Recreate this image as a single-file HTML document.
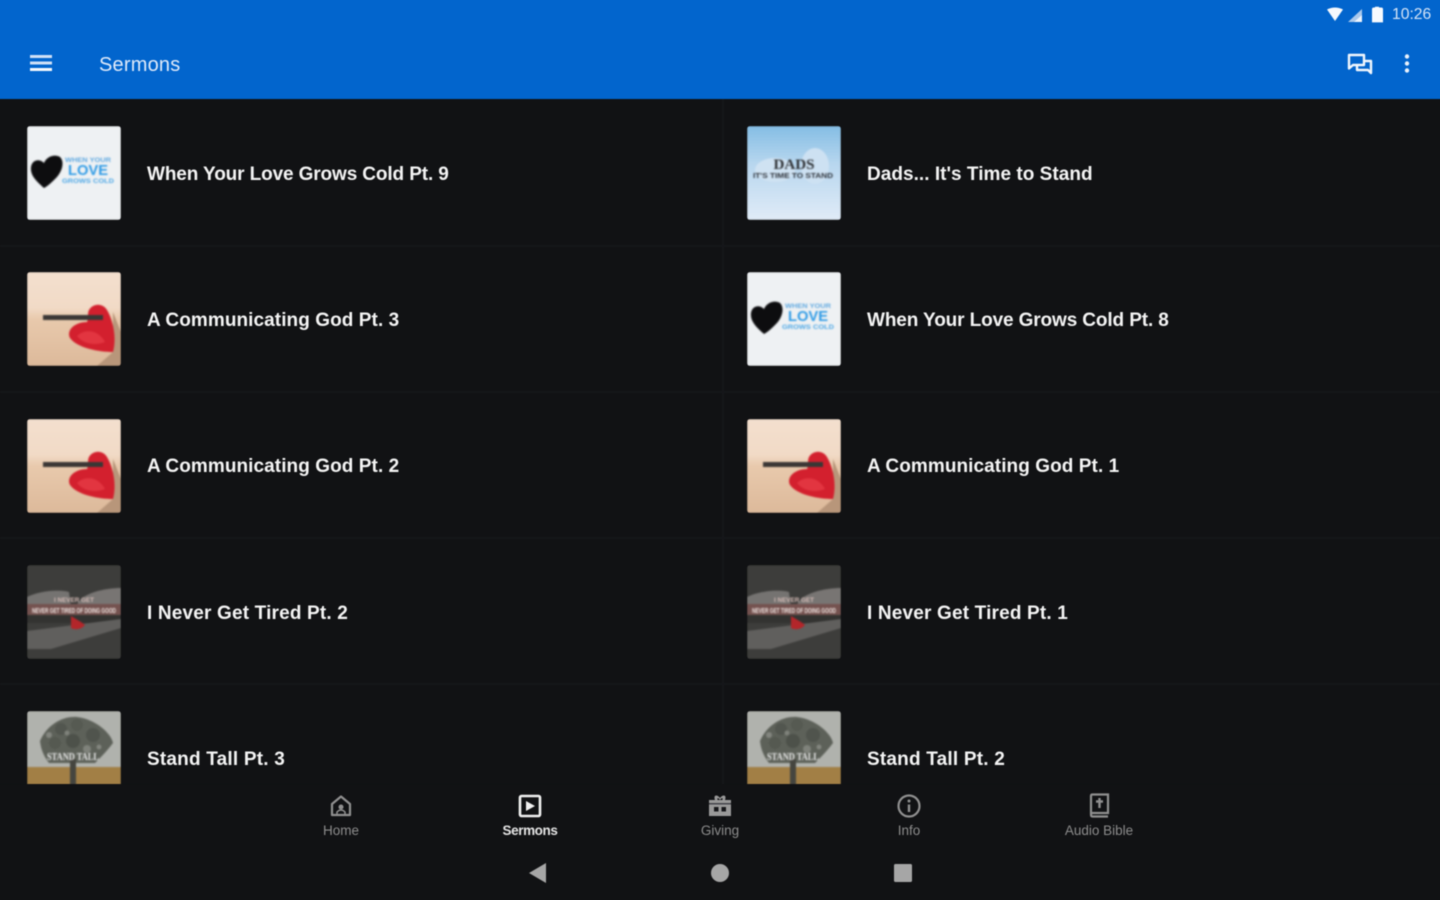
<!DOCTYPE html>
<html lang="en">
<head>
<meta charset="utf-8">
<title>Sermons</title>
<style>
html,body{margin:0;padding:0;width:1440px;height:900px;overflow:hidden;background:#111214;font-family:"Liberation Sans",sans-serif}
#app{position:relative;width:1440px;height:900px;filter:blur(.55px)}
.bar{position:absolute;left:-6px;top:-6px;width:1452px;height:105px;background:#0265cd}
.title{position:absolute;left:99px;top:53px;font-size:20px;line-height:24px;color:#dfeafa;letter-spacing:.2px}
.time{position:absolute;left:1392px;top:6px;font-size:15.700px;line-height:18px;color:#d5e4f7}
.row-t{position:absolute;font-size:19px;line-height:24px;font-weight:bold;color:#f4f4f4;white-space:nowrap}
.ls-w{letter-spacing:-.12px}
.ls-d{letter-spacing:.03px}
.ls-a{letter-spacing:.07px}
.ls-n{letter-spacing:.17px}
.ls-s{letter-spacing:.2px}
.thumb{position:absolute;width:94px;height:94px;overflow:hidden;border-radius:3px}
.thumb svg{display:block}
.soft svg{filter:blur(.8px)}
.softer svg{filter:blur(1.2px)}
.div{position:absolute;background:#16171a}
.fade{position:absolute;left:-6px;top:784px;width:1452px;height:122px;background:#111214}
.nav{position:absolute;top:823px;font-size:13.500px;line-height:15px;color:#8c8c8c;transform:translateX(-50%);white-space:nowrap}
.nav.on{color:#e4e4e4;font-weight:bold;letter-spacing:-.4px}
.ic{position:absolute}
</style>
</head>
<body>
<div id="app">

<div class="bar"></div>

<!-- status bar -->
<svg class="ic" style="left:1325px;top:6px" width="60" height="18" viewBox="0 0 60 18">
<path d="M2 3.500Q10 -.5 18 3.500L10 15Z" fill="#f4f8fd"/>
<path d="M23 16L37 3V16Z" fill="#a9c8ec"/>
<path d="M29 16L37 9V16Z" fill="#eef4fc"/>
<path d="M47 4Q47 2 49 2H50V1H54V2H56Q58 2 58 4V21H47Z" transform="scale(1 .78)" fill="#f7fafe"/>
</svg>
<div class="time">10:26</div>

<!-- hamburger -->
<svg class="ic" style="left:30px;top:54px" width="22" height="18" viewBox="0 0 22 18">
<rect x="0" y="1" width="22" height="3" fill="#cfe0f6"/>
<rect x="0" y="7.500" width="22" height="3" fill="#cfe0f6"/>
<rect x="0" y="14" width="22" height="3" fill="#f4f8fd"/>
</svg>
<div class="title">Sermons</div>

<!-- chat icon -->
<svg class="ic" style="left:1346px;top:52px" width="28" height="24" viewBox="0 0 28 24" fill="none" stroke="#f0f6fd" stroke-width="2.400" stroke-linejoin="round">
<path d="M3 3H18V13H7L3 16.500Z"/>
<path d="M11 13V18H22L25 21V9H18"/>
</svg>
<!-- overflow -->
<svg class="ic" style="left:1402px;top:53px" width="10" height="22" viewBox="0 0 10 22" fill="#e8f1fb">
<circle cx="5" cy="3.500" r="2.200"/><circle cx="5" cy="10.500" r="2.200"/><circle cx="5" cy="17.500" r="2.200"/>
</svg>

<!-- dividers -->
<div class="div" style="left:722px;top:99px;width:2px;height:685px"></div>
<div class="div" style="left:0;top:245px;width:1440px;height:2px"></div>
<div class="div" style="left:0;top:391px;width:1440px;height:2px"></div>
<div class="div" style="left:0;top:537px;width:1440px;height:2px"></div>
<div class="div" style="left:0;top:683px;width:1440px;height:2px"></div>

<!-- ROW 1 -->
<div class="thumb soft" style="left:27px;top:126px">
<svg width="94" height="94" viewBox="0 0 94 94"><rect width="94" height="94" fill="#eef1f3"/>
<path d="M17 62C9 55 3 49 4 41C5 34 12 32 17 37C20 30 28 28 33 31C38 36 35 46 29 52C25 56 21 60 17 62Z" fill="#0d0d0f"/>
<text x="61" y="36" font-family="Liberation Sans" font-size="6.500" font-weight="bold" fill="#5fa8e0" text-anchor="middle" textLength="46" lengthAdjust="spacingAndGlyphs">WHEN YOUR</text>
<text x="61" y="49" font-family="Liberation Sans" font-size="15" font-weight="bold" fill="#2f9be6" text-anchor="middle" textLength="40" lengthAdjust="spacingAndGlyphs">LOVE</text>
<text x="61" y="57" font-family="Liberation Sans" font-size="6.500" font-weight="bold" fill="#4fa8e6" text-anchor="middle" textLength="52" lengthAdjust="spacingAndGlyphs">GROWS COLD</text>
</svg></div>
<div class="row-t ls-w" style="left:147px;top:163px">When Your Love Grows Cold Pt. 9</div>

<div class="thumb soft" style="left:747px;top:126px">
<svg width="94" height="94" viewBox="0 0 94 94"><defs><linearGradient id="sky" x1="0" y1="0" x2="0" y2="1"><stop offset="0" stop-color="#84bde4"/><stop offset=".4" stop-color="#b7d6ee"/><stop offset="1" stop-color="#e0ebf7"/></linearGradient></defs><rect width="94" height="94" fill="url(#sky)"/>
<ellipse cx="28" cy="44" rx="20" ry="12" fill="#cfe2f2"/><ellipse cx="68" cy="40" rx="14" ry="18" fill="#cde1f2"/>
<text x="47" y="43" font-family="Liberation Serif" font-size="15" font-weight="bold" fill="#2d3034" text-anchor="middle" textLength="41" lengthAdjust="spacingAndGlyphs">DADS</text>
<text x="46" y="52" font-family="Liberation Sans" font-size="7" font-weight="bold" fill="#2f343c" text-anchor="middle" textLength="80" lengthAdjust="spacingAndGlyphs">IT'S TIME TO STAND</text>
</svg></div>
<div class="row-t ls-d" style="left:867px;top:163px">Dads... It's Time to Stand</div>

<!-- ROW 2 -->
<div class="thumb soft" style="left:27px;top:272px">
<svg width="94" height="94" viewBox="0 0 94 94"><defs><linearGradient id="wood" x1="0" y1="0" x2="0" y2="1"><stop offset="0" stop-color="#f3dfce"/><stop offset=".38" stop-color="#f1dac6"/><stop offset=".5" stop-color="#e8c9ac"/><stop offset="1" stop-color="#dcb99a"/></linearGradient></defs><rect width="94" height="94" fill="url(#wood)"/>
<path d="M86 40L94 60V94H70L86 80Z" fill="#b8967a"/>
<path d="M62 38C66 31 76 31 80 38C86 48 90 66 86 80C72 80 50 76 43 66C39 58 48 50 60 50C62 46 60 42 62 38Z" fill="#d3202e"/>
<path d="M50 64C58 56 72 58 78 70C68 74 56 72 50 64Z" fill="#e23540"/>
<rect x="16" y="43" width="60" height="5" fill="#3a3735"/>
</svg></div>
<div class="row-t ls-a" style="left:147px;top:309px">A Communicating God Pt. 3</div>

<div class="thumb soft" style="left:747px;top:272px">
<svg width="94" height="94" viewBox="0 0 94 94"><rect width="94" height="94" fill="#eef1f3"/>
<path d="M17 62C9 55 3 49 4 41C5 34 12 32 17 37C20 30 28 28 33 31C38 36 35 46 29 52C25 56 21 60 17 62Z" fill="#0d0d0f"/>
<text x="61" y="36" font-family="Liberation Sans" font-size="6.500" font-weight="bold" fill="#5fa8e0" text-anchor="middle" textLength="46" lengthAdjust="spacingAndGlyphs">WHEN YOUR</text>
<text x="61" y="49" font-family="Liberation Sans" font-size="15" font-weight="bold" fill="#2f9be6" text-anchor="middle" textLength="40" lengthAdjust="spacingAndGlyphs">LOVE</text>
<text x="61" y="57" font-family="Liberation Sans" font-size="6.500" font-weight="bold" fill="#4fa8e6" text-anchor="middle" textLength="52" lengthAdjust="spacingAndGlyphs">GROWS COLD</text>
</svg></div>
<div class="row-t ls-w" style="left:867px;top:309px">When Your Love Grows Cold Pt. 8</div>

<!-- ROW 3 -->
<div class="thumb soft" style="left:27px;top:419px">
<svg width="94" height="94" viewBox="0 0 94 94"><rect width="94" height="94" fill="url(#wood)"/>
<path d="M86 40L94 60V94H70L86 80Z" fill="#b8967a"/>
<path d="M62 38C66 31 76 31 80 38C86 48 90 66 86 80C72 80 50 76 43 66C39 58 48 50 60 50C62 46 60 42 62 38Z" fill="#d3202e"/>
<path d="M50 64C58 56 72 58 78 70C68 74 56 72 50 64Z" fill="#e23540"/>
<rect x="16" y="43" width="60" height="5" fill="#3a3735"/>
</svg></div>
<div class="row-t ls-a" style="left:147px;top:455px">A Communicating God Pt. 2</div>

<div class="thumb soft" style="left:747px;top:419px">
<svg width="94" height="94" viewBox="0 0 94 94"><rect width="94" height="94" fill="url(#wood)"/>
<path d="M86 40L94 60V94H70L86 80Z" fill="#b8967a"/>
<path d="M62 38C66 31 76 31 80 38C86 48 90 66 86 80C72 80 50 76 43 66C39 58 48 50 60 50C62 46 60 42 62 38Z" fill="#d3202e"/>
<path d="M50 64C58 56 72 58 78 70C68 74 56 72 50 64Z" fill="#e23540"/>
<rect x="16" y="43" width="60" height="5" fill="#3a3735"/>
</svg></div>
<div class="row-t ls-a" style="left:867px;top:455px">A Communicating God Pt. 1</div>

<!-- ROW 4 -->
<div class="thumb soft" style="left:27px;top:565px">
<svg width="94" height="94" viewBox="0 0 94 94"><rect width="94" height="94" fill="#3d3d3b"/>
<path d="M0 32C12 26 32 24 42 27L44 42H0Z" fill="#757371"/>
<path d="M50 40C54 28 78 23 94 23V42H50Z" fill="#787573"/>
<rect x="0" y="39" width="94" height="11" fill="#74524f"/>
<text x="47" y="37" font-family="Liberation Sans" font-size="6" font-weight="bold" fill="#d6bcb7" text-anchor="middle" textLength="40" lengthAdjust="spacingAndGlyphs">I NEVER GET</text>
<text x="47" y="48" font-family="Liberation Sans" font-size="7" font-weight="bold" fill="#efe4e1" text-anchor="middle" textLength="84" lengthAdjust="spacingAndGlyphs">NEVER GET TIRED OF DOING GOOD</text>
<rect x="0" y="50" width="94" height="8" fill="#333331"/>
<path d="M0 66L94 54V63L24 84H0Z" fill="#605f5d"/>
<path d="M44 51L54 57L58 60C54 65 47 65 44 63Z" fill="#b3262a"/>
</svg></div>
<div class="row-t ls-n" style="left:147px;top:602px">I Never Get Tired Pt. 2</div>

<div class="thumb soft" style="left:747px;top:565px">
<svg width="94" height="94" viewBox="0 0 94 94"><rect width="94" height="94" fill="#3d3d3b"/>
<path d="M0 32C12 26 32 24 42 27L44 42H0Z" fill="#757371"/>
<path d="M50 40C54 28 78 23 94 23V42H50Z" fill="#787573"/>
<rect x="0" y="39" width="94" height="11" fill="#74524f"/>
<text x="47" y="37" font-family="Liberation Sans" font-size="6" font-weight="bold" fill="#d6bcb7" text-anchor="middle" textLength="40" lengthAdjust="spacingAndGlyphs">I NEVER GET</text>
<text x="47" y="48" font-family="Liberation Sans" font-size="7" font-weight="bold" fill="#efe4e1" text-anchor="middle" textLength="84" lengthAdjust="spacingAndGlyphs">NEVER GET TIRED OF DOING GOOD</text>
<rect x="0" y="50" width="94" height="8" fill="#333331"/>
<path d="M0 66L94 54V63L24 84H0Z" fill="#605f5d"/>
<path d="M44 51L54 57L58 60C54 65 47 65 44 63Z" fill="#b3262a"/>
</svg></div>
<div class="row-t ls-n" style="left:867px;top:602px">I Never Get Tired Pt. 1</div>

<!-- ROW 5 -->
<div class="thumb soft" style="left:27px;top:711px">
<svg width="94" height="94" viewBox="0 0 94 94"><rect width="94" height="94" fill="#b0b2ad"/>
<rect y="56" width="94" height="38" fill="#a27f45"/>
<path d="M13 30C20 14 35 5 50 6C68 8 84 22 86 32C80 40 74 46 68 52H22C16 44 14 38 13 30Z" fill="#5d6159"/>
<circle cx="34" cy="18" r="6" fill="#52564f"/><circle cx="50" cy="14" r="6" fill="#565a52"/><circle cx="66" cy="24" r="7" fill="#50544d"/><circle cx="28" cy="32" r="6" fill="#555951"/><circle cx="46" cy="30" r="7" fill="#4d514a"/><circle cx="60" cy="38" r="4" fill="#7f827b"/><circle cx="22" cy="24" r="3" fill="#82857e"/><circle cx="40" cy="22" r="2.500" fill="#7f827b"/><circle cx="72" cy="36" r="2.500" fill="#82857e"/>
<rect x="43" y="48" width="6" height="30" fill="#45453f"/>
<text x="46" y="49" font-family="Liberation Serif" font-size="11" font-weight="bold" fill="#eee" text-anchor="middle" textLength="52" lengthAdjust="spacingAndGlyphs">STAND TALL</text>
</svg></div>
<div class="row-t ls-s" style="left:147px;top:748px">Stand Tall Pt. 3</div>

<div class="thumb soft" style="left:747px;top:711px">
<svg width="94" height="94" viewBox="0 0 94 94"><rect width="94" height="94" fill="#b0b2ad"/>
<rect y="56" width="94" height="38" fill="#a27f45"/>
<path d="M13 30C20 14 35 5 50 6C68 8 84 22 86 32C80 40 74 46 68 52H22C16 44 14 38 13 30Z" fill="#5d6159"/>
<circle cx="34" cy="18" r="6" fill="#52564f"/><circle cx="50" cy="14" r="6" fill="#565a52"/><circle cx="66" cy="24" r="7" fill="#50544d"/><circle cx="28" cy="32" r="6" fill="#555951"/><circle cx="46" cy="30" r="7" fill="#4d514a"/><circle cx="60" cy="38" r="4" fill="#7f827b"/><circle cx="22" cy="24" r="3" fill="#82857e"/><circle cx="40" cy="22" r="2.500" fill="#7f827b"/><circle cx="72" cy="36" r="2.500" fill="#82857e"/>
<rect x="43" y="48" width="6" height="30" fill="#45453f"/>
<text x="46" y="49" font-family="Liberation Serif" font-size="11" font-weight="bold" fill="#eee" text-anchor="middle" textLength="52" lengthAdjust="spacingAndGlyphs">STAND TALL</text>
</svg></div>
<div class="row-t ls-s" style="left:867px;top:748px">Stand Tall Pt. 2</div>

<!-- bottom nav -->
<div class="fade"></div>

<svg class="ic" style="left:329px;top:794px" width="24" height="24" viewBox="0 0 24 24" fill="none" stroke="#8f8f8f" stroke-width="2.200">
<path d="M3 10L12 2.500L21 10V21H3Z" stroke-linejoin="round"/><circle cx="12" cy="13" r="2.500" fill="#8f8f8f" stroke="none"/><path d="M8 21V18Q12 14 16 18V21" stroke-width="1.500"/>
</svg>
<div class="nav" style="left:341px">Home</div>

<svg class="ic" style="left:518px;top:794px" width="24" height="24" viewBox="0 0 24 24" fill="none">
<rect x="2" y="2" width="20" height="20" rx="1.500" stroke="#f0f0f0" stroke-width="2.600"/><path d="M8 7L17 12L8 17Z" fill="#f0f0f0"/>
</svg>
<div class="nav on" style="left:530px">Sermons</div>

<svg class="ic" style="left:708px;top:793px" width="24" height="25" viewBox="0 0 24 25" fill="#999">
<path d="M1 7H23V23H1Z"/>
<path d="M7 7C5 2 9 1 12 5C15 1 19 2 17 7H14.500C15 5 14 4 12 7C10 4 9 5 9.500 7Z"/>
<rect x="1" y="10" width="22" height="1.500" fill="#44444a"/>
<rect x="6" y="14" width="4.500" height="4.500" fill="#16171a"/><rect x="13.500" y="14" width="4.500" height="4.500" fill="#16171a"/>
</svg>
<div class="nav" style="left:720px">Giving</div>

<svg class="ic" style="left:897px;top:794px" width="24" height="24" viewBox="0 0 24 24" fill="none" stroke="#8f8f8f">
<circle cx="12" cy="12" r="10.500" stroke-width="2.200"/><path d="M12 10.500V18" stroke-width="2.400"/><circle cx="12" cy="7" r="1.500" fill="#8f8f8f" stroke="none"/>
</svg>
<div class="nav" style="left:909px">Info</div>

<svg class="ic" style="left:1088px;top:793px" width="22" height="26" viewBox="0 0 22 26" fill="none" stroke="#8f8f8f">
<path d="M3 21V3Q3 1.500 4.500 1.500H20V20H4.500Q3 20 3 21.500Q3 23.500 4.500 23.500H20" stroke-width="2.200"/>
<path d="M11.500 5V15M8 8.500H15" stroke-width="2.400"/>
</svg>
<div class="nav" style="left:1099px">Audio Bible</div>

<!-- system nav -->
<svg class="ic" style="left:527px;top:862px" width="20" height="22" viewBox="0 0 20 22"><path d="M2 11L19 1V21Z" fill="#a6a6a6"/></svg>
<svg class="ic" style="left:710px;top:863px" width="20" height="20" viewBox="0 0 20 20"><circle cx="10" cy="10" r="9" fill="#a6a6a6"/></svg>
<svg class="ic" style="left:893px;top:863px" width="20" height="20" viewBox="0 0 20 20"><rect x="1" y="1" width="18" height="18" rx="1.500" fill="#a6a6a6"/></svg>

</div>
</body>
</html>
